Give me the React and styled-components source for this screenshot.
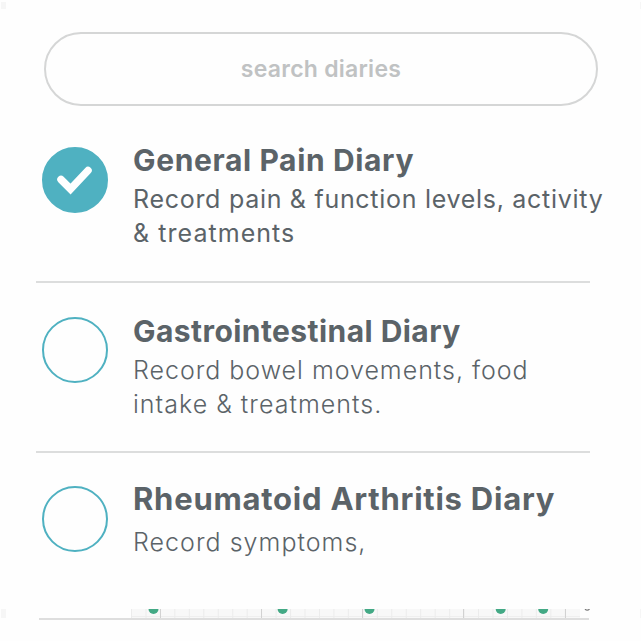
import React from "react";
import styled, { createGlobalStyle } from "styled-components";

const GlobalStyle = createGlobalStyle`
  * { box-sizing: border-box; }
  body { margin: 0; background: #fefefe; overflow: hidden; }
`;

const Page = styled.main`
  width: 641px;
  height: 641px;
  overflow: hidden;
  background: #fefefe;
  color: #5b6368;
  font-family: Inter, "Open Sans", sans-serif;
`;

const Header = styled.header`
  height: 32px;
  padding: 2px 0 0 1px;
  display: flex;
  justify-content: space-between;
`;

const EdgeMark = styled.span`
  flex: none;
  width: ${(p) => p.$width}px;
  height: ${(p) => p.$height}px;
  background: #f6f6f6;
`;

const SearchInput = styled.input`
  display: block;
  width: 554px;
  height: 74px;
  margin-left: 44px;
  padding: 0;
  border: 2px solid #d5d6d6;
  border-radius: 37px;
  outline: none;
  background: transparent;
  text-align: center;
  font: 600 23px Inter, sans-serif;
  letter-spacing: 0.25px;
  &::placeholder { color: #c0c2c3; opacity: 1; }
`;

const DiaryRow = styled.section`
  display: flex;
  width: 554px;
  height: ${(p) => p.$height}px;
  margin-left: 36px;
  border-bottom: ${(p) => (p.$last ? "none" : "2px solid #dcdddd")};
`;

const Toggle = styled.button`
  flex: none;
  width: 66px;
  height: 66px;
  margin: ${(p) => p.$top}px 25px 0 6px;
  padding: 0;
  border: 2px solid #4fb1c1;
  border-radius: 50%;
  background: ${(p) => (p.$checked ? "#4fb1c1" : "transparent")};
  svg { display: block; width: 62px; height: 62px; }
`;

const Copy = styled.div`
  padding-top: ${(p) => p.$top}px;
  white-space: nowrap;
`;

const Title = styled.h2`
  margin: 0 0 ${(p) => p.$gap}px;
  font-size: ${(p) => p.$size}px;
  line-height: 36px;
  font-weight: 650;
  letter-spacing: ${(p) => p.$track}px;
`;

const Line = styled.div`
  font-size: 25px;
  line-height: 34px;
  font-weight: ${(p) => (p.$light ? 300 : 400)};
  letter-spacing: ${(p) => p.$track}px;
`;

const Footer = styled.footer`
  display: flex;
  height: 32px;
  padding-left: 1px;
  svg { display: block; flex: none; width: 634px; height: 32px; }
`;

const diaries = [
  { title: "General Pain Diary", size: 30, track: 0.63, height: 177, toggleTop: 41, top: 36, gap: 4, checked: true,
    lines: [["Record pain & function levels, activity", 0.71], ["& treatments", 1.05]] },
  { title: "Gastrointestinal Diary", size: 30, track: 0.44, height: 170, toggleTop: 34, top: 30, gap: 4,
    lines: [["Record bowel movements, food", 0.98], ["intake & treatments.", 1.02]] },
  { title: "Rheumatoid Arthritis Diary", size: 31, track: 0.76, height: 156, toggleTop: 33, top: 28, gap: 8, last: true,
    lines: [["Record symptoms,", 1.03]] },
];

const minorLines = Array.from({ length: 31 }, (_, i) => 131.5 + i * 14.46);
const majorLines = [160.5, 261.5, 362.5, 463.5, 565.5];
const points = [153.5, 282.6, 369.5, 500.7, 543.2];

function ChartStrip() {
  return (
    <svg viewBox="6 609 634 32">
      <rect x="131" y="609" width="449" height="9" fill="#f8f8f8" />
      <path d="M131 616.5H580" stroke="#efefef" />
      {minorLines.map((x) => <path key={x} d={`M${x} 609V618`} stroke="#ececec" />)}
      {majorLines.map((x) => <path key={x} d={`M${x} 609V618`} stroke="#d2d2d2" />)}
      {points.map((x) => <circle key={x} cx={x} cy="609" r="5" fill="#43a985" />)}
      <path d="M585 609Q587.2 611.3 589.5 609" fill="none" stroke="#777" strokeWidth="1.2" />
      <path d="M39 619H589" stroke="#dedede" strokeWidth="2" />
    </svg>
  );
}

export default function App() {
  return (
    <Page>
      <GlobalStyle />
      <Header><EdgeMark $width={5} $height={7} /><EdgeMark $width={1} $height={7} /></Header>
      <SearchInput placeholder="search diaries" aria-label="search diaries" />
      {diaries.map((d) => (
        <DiaryRow key={d.title} $height={d.height} $last={d.last}>
          <Toggle $checked={d.checked} $top={d.toggleTop} aria-label={d.title}>
            {d.checked && (
              <svg viewBox="44 149 62 62" fill="none" stroke="#fff" strokeWidth="7.5" strokeLinecap="round" strokeLinejoin="miter">
                <path d="M61 179.5L70.5 189L88 170.5" />
              </svg>
            )}
          </Toggle>
          <Copy $top={d.top}>
            <Title $size={d.size} $track={d.track} $gap={d.gap}>{d.title}</Title>
            {d.lines.map(([text, track]) => (
              <Line key={text} $light={!d.checked} $track={track}>{text}</Line>
            ))}
          </Copy>
        </DiaryRow>
      ))}
      <Footer>
        <EdgeMark $width={5} $height={9} />
        <ChartStrip />
        <EdgeMark $width={1} $height={9} />
      </Footer>
    </Page>
  );
}
